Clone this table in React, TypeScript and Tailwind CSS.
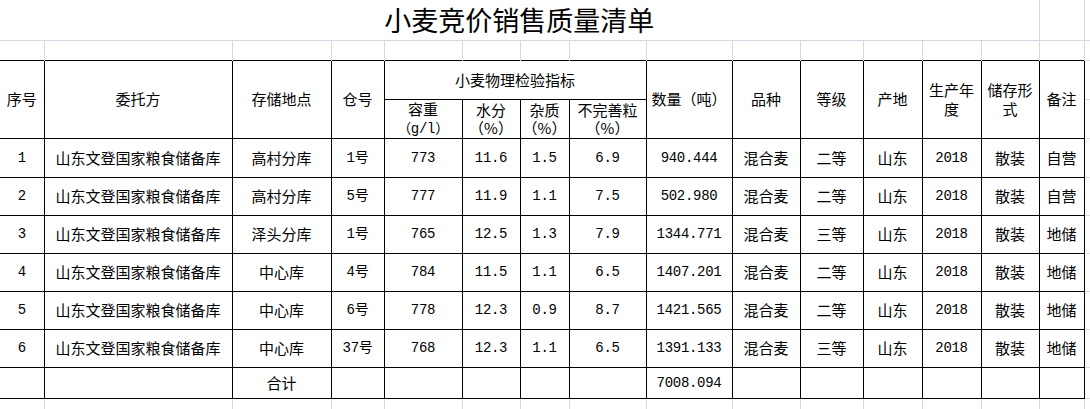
const colWidths = [44, 188, 99, 53, 78, 58, 49, 77, 86, 68, 63, 59, 59, 58, 45, 10];

const rows = [
  ["1", "山东文登国家粮食储备库", "高村分库", "1号", "773", "11.6", "1.5", "6.9", "940.444", "混合麦", "二等", "山东", "2018", "散装", "自营"],
  ["2", "山东文登国家粮食储备库", "高村分库", "5号", "777", "11.9", "1.1", "7.5", "502.980", "混合麦", "二等", "山东", "2018", "散装", "自营"],
  ["3", "山东文登国家粮食储备库", "泽头分库", "1号", "765", "12.5", "1.3", "7.9", "1344.771", "混合麦", "三等", "山东", "2018", "散装", "地储"],
  ["4", "山东文登国家粮食储备库", "中心库", "4号", "784", "11.5", "1.1", "6.5", "1407.201", "混合麦", "二等", "山东", "2018", "散装", "地储"],
  ["5", "山东文登国家粮食储备库", "中心库", "6号", "778", "12.3", "0.9", "8.7", "1421.565", "混合麦", "二等", "山东", "2018", "散装", "地储"],
  ["6", "山东文登国家粮食储备库", "中心库", "37号", "768", "12.3", "1.1", "6.5", "1391.133", "混合麦", "三等", "山东", "2018", "散装", "地储"],
];

const total = ["", "", "合计", "", "", "", "", "", "7008.094", "", "", "", "", "", ""];

// columns drawn with the half-width digit font
const numeric = new Set([0, 3, 4, 5, 6, 7, 8, 12]);

const cjk = "font-['Noto_Sans_CJK_SC',sans-serif] text-[15px]";
const mono = "font-['Liberation_Mono','Noto_Sans_CJK_SC',monospace] text-[14px] tracking-[-0.3px]";
const cell = "border border-black text-center align-middle p-0 leading-[18px] text-black";
const grid = "border-[#d4dae4]";

function Cell({ value, col }: { value: string; col: number }) {
  return (
    <td className={`${cell} ${numeric.has(col) ? mono : cjk} ${col === 0 ? "border-l-0" : ""}`}>
      {value}
    </td>
  );
}

function GridTail() {
  return <td className={`border border-l-0 ${grid} p-0`} />;
}

export default function App() {
  return (
    <div className="w-[1090px] h-[409px] overflow-hidden bg-white">
      <table className="table-fixed border-collapse w-[1094px]">
        <colgroup>
          {colWidths.map((w, i) => (
            <col key={i} style={{ width: w }} />
          ))}
        </colgroup>
        <tbody>
          {/* title row */}
          <tr className="h-[40px]">
            <td
              colSpan={14}
              className={`border-b border-r ${grid} text-center align-middle p-0 font-['Noto_Sans_CJK_SC',sans-serif] text-[27px] font-normal leading-none text-black`}
            >
              小麦竞价销售质量清单
            </td>
            <td className={`border-b border-r ${grid} p-0`} />
            <td className={`border-b ${grid} p-0`} />
          </tr>

          {/* empty spreadsheet row above the table */}
          <tr className="h-[20px]">
            {colWidths.map((_, i) => (
              <td key={i} className={`border-x ${grid} ${i === 0 ? "border-l-0" : ""} p-0`} />
            ))}
          </tr>

          {/* header */}
          <tr className="h-[39px]">
            <td rowSpan={2} className={`${cell} ${cjk} border-l-0`}>序号</td>
            <td rowSpan={2} className={`${cell} ${cjk}`}>委托方</td>
            <td rowSpan={2} className={`${cell} ${cjk}`}>存储地点</td>
            <td rowSpan={2} className={`${cell} ${cjk}`}>仓号</td>
            <td colSpan={4} className={`${cell} ${cjk}`}>小麦物理检验指标</td>
            <td rowSpan={2} className={`${cell} ${cjk}`}>数量（吨）</td>
            <td rowSpan={2} className={`${cell} ${cjk}`}>品种</td>
            <td rowSpan={2} className={`${cell} ${cjk}`}>等级</td>
            <td rowSpan={2} className={`${cell} ${cjk}`}>产地</td>
            <td rowSpan={2} className={`${cell} ${cjk} px-[4px] leading-[19px]`}>生产年度</td>
            <td rowSpan={2} className={`${cell} ${cjk} px-[4px] leading-[19px]`}>储存形式</td>
            <td rowSpan={2} className={`${cell} ${cjk}`}>备注</td>
            <GridTail />
          </tr>
          <tr className="h-[36px]">
            <td className={`${cell} ${cjk} leading-[17px]`}>
              容重
              <br />
              <span className={mono}>（g/l）</span>
            </td>
            <td className={`${cell} ${cjk} leading-[17px]`}>
              水分
              <br />
              （%）
            </td>
            <td className={`${cell} ${cjk} leading-[17px]`}>
              杂质
              <br />
              （%）
            </td>
            <td className={`${cell} ${cjk} leading-[17px]`}>
              不完善粒
              <br />
              （%）
            </td>
            <GridTail />
          </tr>

          {rows.map((r, ri) => (
            <tr key={ri} className={ri === 0 ? "h-[39px]" : "h-[38px]"}>
              {r.map((v, ci) => (
                <Cell key={ci} value={v} col={ci} />
              ))}
              <GridTail />
            </tr>
          ))}

          <tr className="h-[31px]">
            {total.map((v, ci) => (
              <Cell key={ci} value={v} col={ci} />
            ))}
            <GridTail />
          </tr>

          {/* empty spreadsheet row below */}
          <tr className="h-[14px]">
            {colWidths.map((_, i) => (
              <td key={i} className={`border-x ${grid} ${i === 0 ? "border-l-0" : ""} p-0`} />
            ))}
          </tr>
        </tbody>
      </table>
    </div>
  );
}
